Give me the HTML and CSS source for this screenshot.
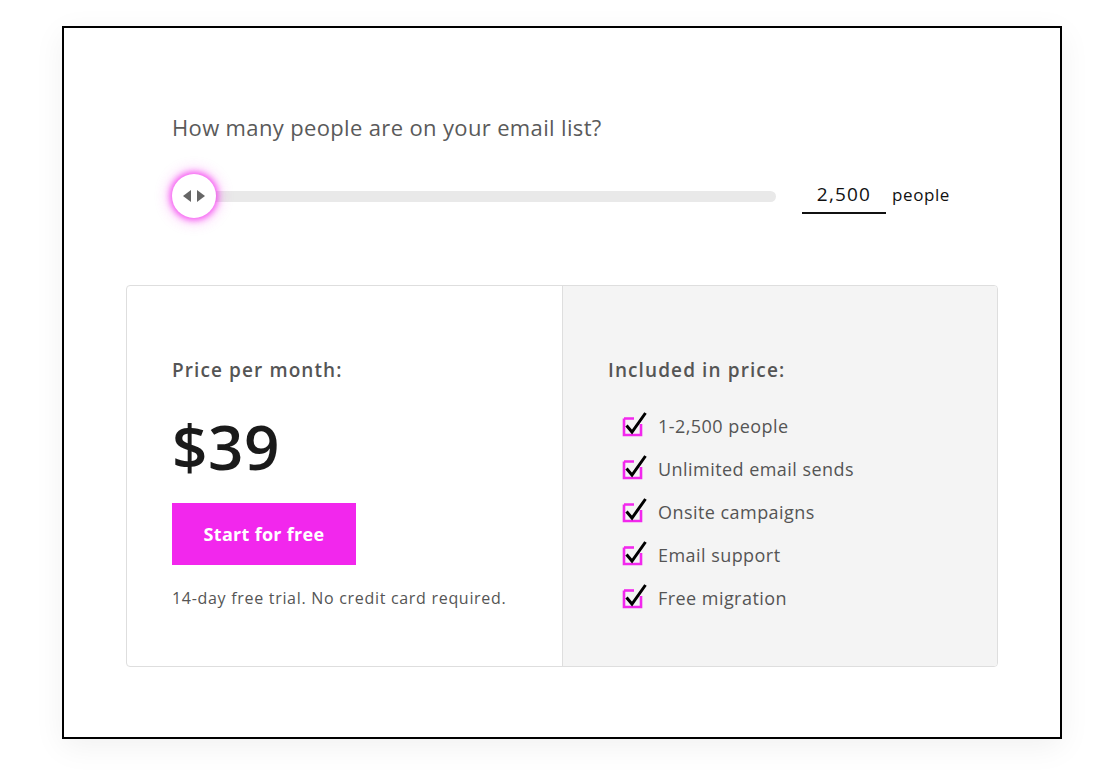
FILE: index.html
```html
<!DOCTYPE html>
<html>
<head>
<meta charset="utf-8">
<link rel="stylesheet" href="styles.css">
</head>
<body>
<div class="frame">
  <div class="question">
    <p class="q-label">How many people are on your email list?</p>
    <div class="slider-row">
      <div class="slider">
        <div class="track"></div>
        <div class="thumb">
          <svg width="26" height="14" viewBox="0 0 26 14"><polygon points="2,7 10,1 10,13" fill="#666"/><polygon points="24,7 16,1 16,13" fill="#666"/></svg>
        </div>
      </div>
      <div class="count">
        <span class="count-input">2,500</span>
        <span class="count-unit">people</span>
      </div>
    </div>
  </div>
  <div class="card">
    <div class="panel panel-left">
      <p class="panel-title">Price per month:</p>
      <p class="price">$39</p>
      <a class="cta">Start for free</a>
      <p class="note">14-day free trial. No credit card required.</p>
    </div>
    <div class="panel panel-right">
      <p class="panel-title">Included in price:</p>
      <ul class="features">
        <li><svg class="chk" width="26" height="26" viewBox="0 0 26 26"><path d="M3 7.5 V24 H20 V13" fill="none" stroke="#f227ed" stroke-width="2.6"/><path d="M3 7.5 H13" fill="none" stroke="#f227ed" stroke-width="2.6"/><path d="M5.5 14.5 L11 21 L24.5 2" fill="none" stroke="#000" stroke-width="3"/></svg><span>1-2,500 people</span></li>
        <li><svg class="chk" width="26" height="26" viewBox="0 0 26 26"><path d="M3 7.5 V24 H20 V13" fill="none" stroke="#f227ed" stroke-width="2.6"/><path d="M3 7.5 H13" fill="none" stroke="#f227ed" stroke-width="2.6"/><path d="M5.5 14.5 L11 21 L24.5 2" fill="none" stroke="#000" stroke-width="3"/></svg><span>Unlimited email sends</span></li>
        <li><svg class="chk" width="26" height="26" viewBox="0 0 26 26"><path d="M3 7.5 V24 H20 V13" fill="none" stroke="#f227ed" stroke-width="2.6"/><path d="M3 7.5 H13" fill="none" stroke="#f227ed" stroke-width="2.6"/><path d="M5.5 14.5 L11 21 L24.5 2" fill="none" stroke="#000" stroke-width="3"/></svg><span>Onsite campaigns</span></li>
        <li><svg class="chk" width="26" height="26" viewBox="0 0 26 26"><path d="M3 7.5 V24 H20 V13" fill="none" stroke="#f227ed" stroke-width="2.6"/><path d="M3 7.5 H13" fill="none" stroke="#f227ed" stroke-width="2.6"/><path d="M5.5 14.5 L11 21 L24.5 2" fill="none" stroke="#000" stroke-width="3"/></svg><span>Email support</span></li>
        <li><svg class="chk" width="26" height="26" viewBox="0 0 26 26"><path d="M3 7.5 V24 H20 V13" fill="none" stroke="#f227ed" stroke-width="2.6"/><path d="M3 7.5 H13" fill="none" stroke="#f227ed" stroke-width="2.6"/><path d="M5.5 14.5 L11 21 L24.5 2" fill="none" stroke="#000" stroke-width="3"/></svg><span>Free migration</span></li>
      </ul>
    </div>
  </div>
</div>
</body>
</html>
```
FILE: styles.css
```css
* { box-sizing: border-box; }
html, body { margin: 0; padding: 0; background: #fff; }
body {
  font-family: "Open Sans", "Noto Sans", sans-serif;
  color: #555;
  width: 1118px;
  height: 777px;
  overflow: hidden;
}
p { margin: 0; }
.frame {
  margin: 26px 0 0 62px;
  width: 1000px;
  height: 713px;
  border: 2px solid #000;
  padding: 84px 62px 0 62px;
  box-shadow: 0 8px 30px rgba(0,0,0,0.06);
}
.question { padding-left: 46px; }
.q-label {
  font-size: 22px;
  line-height: 30px;
  letter-spacing: 0.35px;
  color: #5a5a5a;
}
.slider-row {
  display: flex;
  align-items: center;
  margin-top: 34px;
  height: 40px;
}
.slider {
  position: relative;
  width: 604px;
  height: 40px;
  display: flex;
  align-items: center;
}
.track {
  width: 100%;
  margin-left: 18px;
  height: 11px;
  background: #e9e9e9;
  border-radius: 6px;
}
.thumb {
  position: absolute;
  left: 0;
  top: -2px;
  width: 44px;
  height: 44px;
  border-radius: 50%;
  background: #fff;
  box-shadow: 0 0 6px 2px rgba(242, 39, 237, 0.75), 0 0 14px 4px rgba(242, 39, 237, 0.25);
  display: flex;
  align-items: center;
  justify-content: center;
}
.count {
  display: flex;
  align-items: center;
  margin-left: 26px;
}
.count-input {
  display: block;
  width: 84px;
  text-align: center;
  font-size: 19px;
  line-height: 24px;
  color: #111;
  letter-spacing: 1.2px;
  padding: 3px 0 6px;
  border-bottom: 2px solid #111;
}
.count-unit {
  margin-left: 6px;
  font-size: 17px;
  letter-spacing: 0.6px;
  color: #111;
  margin-top: -4px;
}
.card {
  margin-top: 69px;
  height: 382px;
  display: flex;
  border: 1px solid #dedede;
  border-radius: 4px;
  overflow: hidden;
}
.panel { flex: 1; padding: 71px 0 0 45px; }
.panel-left { border-right: 1px solid #dedede; flex: 0 0 436px; }
.panel-right { background: #f4f4f4; }
.panel-title {
  font-size: 19px;
  line-height: 26px;
  font-weight: 600;
  color: #555;
  letter-spacing: 1.1px;
}
.price {
  margin-top: 27px;
  font-size: 62px;
  line-height: 72px;
  font-weight: 600;
  letter-spacing: 0.5px;
  color: #1a1a1a;
}
.cta {
  display: flex;
  align-items: center;
  justify-content: center;
  margin-top: 21px;
  width: 184px;
  height: 62px;
  background: #f227ed;
  color: #fff;
  font-size: 18px;
  font-weight: 700;
  letter-spacing: 0.3px;
}
.note {
  margin-top: 22px;
  font-size: 16px;
  line-height: 22px;
  letter-spacing: 0.7px;
  color: #555;
}
.features {
  list-style: none;
  margin: 21px 0 0 13px;
  padding: 0;
}
.features li {
  display: flex;
  align-items: center;
  height: 43px;
  font-size: 18px;
  letter-spacing: 0.45px;
  color: #555;
}
.chk { margin-right: 11px; margin-top: -4px; }
```
